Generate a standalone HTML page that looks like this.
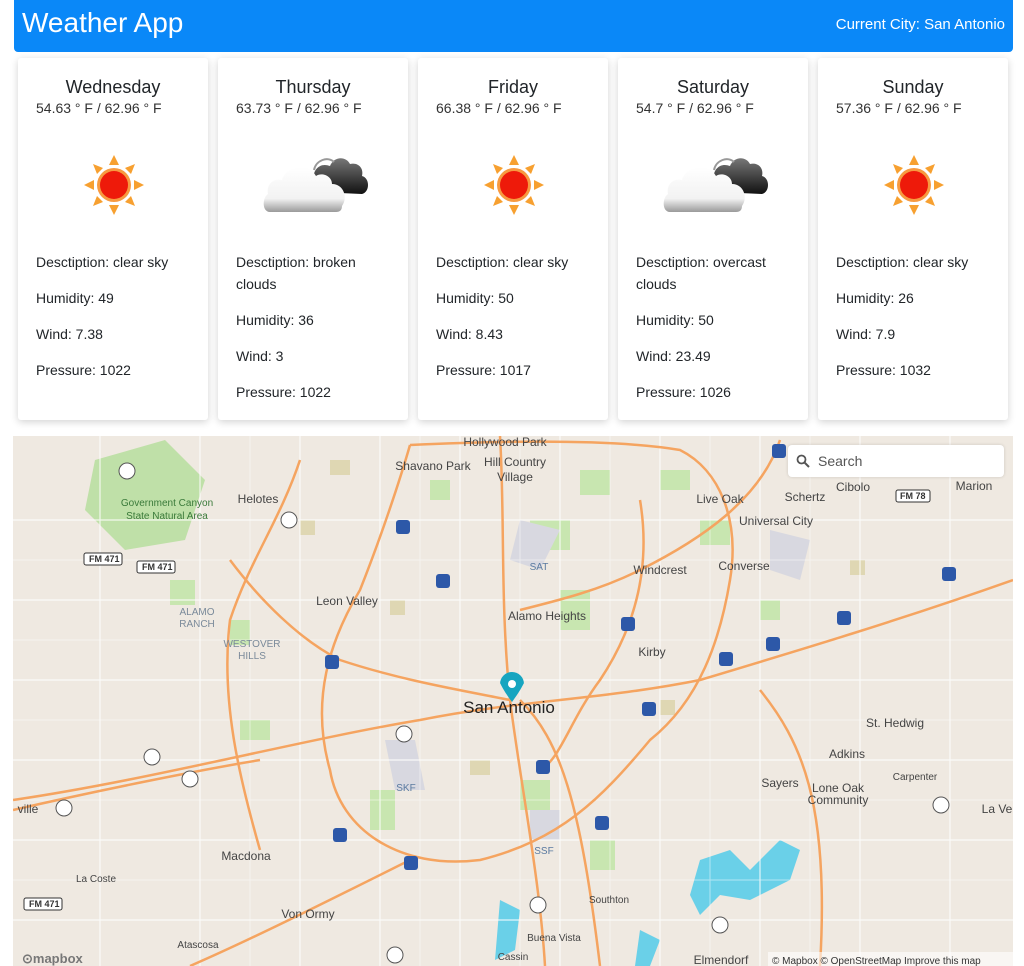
<!DOCTYPE html>
<html><head><meta charset="utf-8">
<style>
*{box-sizing:border-box}
body{margin:0;background:#fff;font-family:"Liberation Sans",Arial,sans-serif;color:#212529;width:1024px;height:966px;overflow:hidden;position:relative}
.hdr{position:absolute;left:14px;top:0;width:999px;height:52px;background:#0a88f8;border-radius:0 0 4px 4px;color:#fff}
.hdr h1{margin:0;position:absolute;left:8px;top:7px;font-size:28px;font-weight:400}
.hdr span{position:absolute;right:8px;top:16px;font-size:15px}
.card{position:absolute;top:58px;width:190px;height:362px;background:#fff;border-radius:3px;box-shadow:0 2px 8px rgba(0,0,0,.18)}
.card h3{margin:0;position:absolute;top:19px;width:100%;text-align:center;font-size:18px;font-weight:400}
.card .t{position:absolute;top:42px;left:18px;font-size:14px;color:#333}
.card .ic{position:absolute;top:90px;left:0;width:100%;height:70px}
.card .d{position:absolute;top:193px;left:18px;width:160px;font-size:14px;line-height:22px}
.card .d p{margin:0 0 14px}
.map{position:absolute;left:13px;top:436px;width:1000px;height:530px;background:#efe9e1;overflow:hidden}
.search{position:absolute;left:788px;top:445px;width:216px;height:32px;background:#fff;border-radius:4px;box-shadow:0 0 3px rgba(0,0,0,.15);font-size:14px;color:#555;padding:8px 0 0 30px}
</style></head><body>
<div class="hdr"><h1>Weather App</h1><span>Current City: San Antonio</span></div>

<svg width="0" height="0" style="position:absolute"><defs>
<linearGradient id="wg" x1="0" y1="0" x2="0" y2="1"><stop offset="0" stop-color="#fff"/><stop offset=".7" stop-color="#f2f2f2"/><stop offset="1" stop-color="#9a9a9a"/></linearGradient>
<linearGradient id="dg" x1="0" y1="0" x2="0" y2="1"><stop offset="0" stop-color="#777"/><stop offset="1" stop-color="#111"/></linearGradient>
<g id="sun"><g fill="#f7a030"><polygon points="0,-30 5,-20 -5,-20"/><polygon points="0,30 5,20 -5,20"/><polygon points="-30,0 -20,5 -20,-5"/><polygon points="30,0 20,5 20,-5"/><polygon points="-21,-21 -11,-17 -17,-11"/><polygon points="21,21 11,17 17,11"/><polygon points="21,-21 11,-17 17,-11"/><polygon points="-21,21 -11,17 -17,11"/></g><circle r="17" fill="#f79a40"/><circle r="14" fill="#ee1a0a"/></g>
<g id="cloud">
<path d="M100,44 C94,44 92,36 96,32 C94,22 102,14 112,18 C116,8 128,8 132,16 C140,14 146,20 144,28 C152,30 152,44 144,46 Z" fill="url(#dg)"/>
<path d="M96,22 C98,12 110,8 116,14" fill="none" stroke="#999" stroke-width="2"/>
<path d="M52,64 C44,64 44,50 50,46 C48,36 56,30 64,32 C68,18 90,14 98,28 C104,24 114,28 114,36 C126,36 130,50 124,58 C124,62 122,64 118,64 Z" fill="url(#wg)"/>
</g>
</defs></svg>

<div class="card" style="left:18px"><h3>Wednesday</h3><div class="t">54.63 ° F / 62.96 ° F</div><svg class="ic"><use href="#sun" transform="translate(96,37)"/></svg><div class="d"><p>Desctiption: clear sky</p><p>Humidity: 49</p><p>Wind: 7.38</p><p>Pressure: 1022</p></div></div>
<div class="card" style="left:218px"><h3>Thursday</h3><div class="t">63.73 ° F / 62.96 ° F</div><svg class="ic"><use href="#cloud"/></svg><div class="d"><p>Desctiption: broken clouds</p><p>Humidity: 36</p><p>Wind: 3</p><p>Pressure: 1022</p></div></div>
<div class="card" style="left:418px"><h3>Friday</h3><div class="t">66.38 ° F / 62.96 ° F</div><svg class="ic"><use href="#sun" transform="translate(96,37)"/></svg><div class="d"><p>Desctiption: clear sky</p><p>Humidity: 50</p><p>Wind: 8.43</p><p>Pressure: 1017</p></div></div>
<div class="card" style="left:618px"><h3>Saturday</h3><div class="t">54.7 ° F / 62.96 ° F</div><svg class="ic"><use href="#cloud"/></svg><div class="d"><p>Desctiption: overcast clouds</p><p>Humidity: 50</p><p>Wind: 23.49</p><p>Pressure: 1026</p></div></div>
<div class="card" style="left:818px"><h3>Sunday</h3><div class="t">57.36 ° F / 62.96 ° F</div><svg class="ic"><use href="#sun" transform="translate(96,37)"/></svg><div class="d"><p>Desctiption: clear sky</p><p>Humidity: 26</p><p>Wind: 7.9</p><p>Pressure: 1032</p></div></div>

<div class="map">
<svg width="1000" height="530" viewBox="13 436 1000 530" font-family="Liberation Sans,sans-serif">
<g fill="#c8e6b0">
<path d="M95,460 l70,-20 l40,40 l-20,60 l-60,10 l-40,-40z" fill="#bfe0a8"/>
<rect x="530" y="520" width="40" height="30"/><rect x="560" y="590" width="30" height="40"/><rect x="660" y="470" width="30" height="20"/><rect x="370" y="790" width="25" height="40"/><rect x="520" y="780" width="30" height="30"/><rect x="700" y="520" width="30" height="25"/><rect x="230" y="620" width="20" height="25"/><rect x="760" y="600" width="20" height="20"/><rect x="590" y="840" width="25" height="30"/><rect x="240" y="720" width="30" height="20"/><rect x="430" y="480" width="20" height="20"/><rect x="170" y="580" width="25" height="25"/><rect x="580" y="470" width="30" height="25"/>
</g>
<g fill="#d9cfa0" opacity=".7"><rect x="330" y="460" width="20" height="15"/><rect x="390" y="600" width="15" height="15"/><rect x="470" y="760" width="20" height="15"/><rect x="660" y="700" width="15" height="15"/><rect x="300" y="520" width="15" height="15"/><rect x="850" y="560" width="15" height="15"/></g>
<g fill="#d8d8e0"><path d="M520,520 l40,10 l-20,40 l-30,-10z"/><path d="M770,530 l40,10 l-10,40 l-30,-10z"/><path d="M385,740 l30,0 l10,50 l-30,0z"/><path d="M530,810 l30,0 l0,30 l-30,0z"/></g>
<g fill="#6ad0e8"><path d="M700,860 l30,-10 l20,20 l30,-30 l20,10 l-10,30 l-40,20 l-30,-5 l-20,20 l-10,-20z"/><path d="M500,900 l20,10 l-5,40 l-20,10z"/><path d="M640,930 l20,10 l-10,26 l-15,0z"/></g>
<g stroke="#fff" stroke-width="1.2" fill="none" opacity=".8">
<path d="M13,520 H1013 M13,600 H1013 M13,680 H1013 M13,760 H1013 M13,840 H1013 M13,920 H1013 M100,436 V966 M200,436 V966 M300,436 V966 M380,436 V966 M460,436 V966 M560,436 V966 M660,436 V966 M760,436 V966 M860,436 V966 M950,436 V966"/>
<path d="M13,560 H1013 M13,640 H1013 M13,720 H1013 M13,800 H1013 M13,880 H1013 M250,436 V966 M420,436 V966 M520,436 V966 M610,436 V966 M710,436 V966 M810,436 V966" stroke-width="1" opacity=".6"/>
</g>
<g stroke="#f5a460" stroke-width="2.5" fill="none">
<path d="M410,445 C520,440 620,440 680,450 C720,470 740,520 730,580 C720,640 700,700 650,740 C600,800 560,840 480,860 C400,870 340,830 330,770 C310,700 330,640 360,590 C380,540 400,480 410,445"/>
<path d="M13,800 C150,780 300,740 420,720 C520,700 600,700 700,680 C800,650 900,620 1013,580"/>
<path d="M13,810 C100,790 200,770 260,760"/>
<path d="M500,436 C505,520 500,600 510,700 C520,780 540,880 545,966"/>
<path d="M520,700 C560,740 580,800 600,966"/>
<path d="M230,560 C260,600 300,640 340,660 C400,680 460,690 510,700"/>
<path d="M640,500 C650,560 640,620 600,680 C570,720 560,760 540,770"/>
<path d="M780,440 C760,500 700,540 640,570 C600,590 560,600 520,610"/>
<path d="M190,966 C250,940 330,900 410,860"/>
<path d="M760,690 C800,740 830,800 820,966"/>
<path d="M300,460 C280,520 250,560 230,620 C220,700 240,780 260,850"/>
</g>
<g font-size="12" fill="#444" text-anchor="middle">
<text x="505" y="446">Hollywood Park</text><text x="433" y="470">Shavano Park</text><text x="515" y="466">Hill Country</text><text x="515" y="481">Village</text><text x="258" y="503">Helotes</text><text x="720" y="503">Live Oak</text><text x="805" y="501">Schertz</text><text x="853" y="491">Cibolo</text><text x="974" y="490">Marion</text><text x="776" y="525">Universal City</text><text x="660" y="574">Windcrest</text><text x="744" y="570">Converse</text><text x="347" y="605">Leon Valley</text><text x="547" y="620">Alamo Heights</text><text x="652" y="656">Kirby</text><text x="895" y="727">St. Hedwig</text><text x="847" y="758">Adkins</text><text x="780" y="787">Sayers</text><text x="838" y="792">Lone Oak</text><text x="838" y="804">Community</text><text x="915" y="780" font-size="10">Carpenter</text><text x="997" y="813">La Ve</text><text x="246" y="860">Macdona</text><text x="96" y="882" font-size="10">La Coste</text><text x="308" y="918">Von Ormy</text><text x="198" y="948" font-size="10">Atascosa</text><text x="554" y="941" font-size="10">Buena Vista</text><text x="609" y="903" font-size="10">Southton</text><text x="513" y="960" font-size="10">Cassin</text><text x="721" y="964">Elmendorf</text><text x="28" y="813">ville</text>
<text x="167" y="506" font-size="10" fill="#3a7a3a">Government Canyon</text><text x="167" y="519" font-size="10" fill="#3a7a3a">State Natural Area</text>
<text x="197" y="615" font-size="10" fill="#7a8a9a">ALAMO</text><text x="197" y="627" font-size="10" fill="#7a8a9a">RANCH</text><text x="252" y="647" font-size="10" fill="#7a8a9a">WESTOVER</text><text x="252" y="659" font-size="10" fill="#7a8a9a">HILLS</text>
<text x="539" y="570" font-size="10" fill="#5a7aa0">SAT</text><text x="406" y="791" font-size="10" fill="#5a7aa0">SKF</text><text x="544" y="854" font-size="10" fill="#5a7aa0">SSF</text>
</g>
<text x="509" y="713" font-size="17" fill="#222" text-anchor="middle">San Antonio</text>
<g font-size="9" font-weight="bold" fill="#333">
<rect x="84" y="553" width="38" height="12" rx="2" fill="#fff" stroke="#333"/><text x="89" y="562">FM 471</text>
<rect x="137" y="561" width="38" height="12" rx="2" fill="#fff" stroke="#333"/><text x="142" y="570">FM 471</text>
<rect x="896" y="490" width="34" height="12" rx="2" fill="#fff" stroke="#333"/><text x="900" y="499">FM 78</text>
<rect x="24" y="898" width="38" height="12" rx="2" fill="#fff" stroke="#333"/><text x="29" y="907">FM 471</text>
</g>
<g fill="#2d58a8">
<rect x="396" y="520" width="14" height="14" rx="3"/><rect x="436" y="574" width="14" height="14" rx="3"/><rect x="621" y="617" width="14" height="14" rx="3"/><rect x="325" y="655" width="14" height="14" rx="3"/><rect x="642" y="702" width="14" height="14" rx="3"/><rect x="536" y="760" width="14" height="14" rx="3"/><rect x="595" y="816" width="14" height="14" rx="3"/><rect x="333" y="828" width="14" height="14" rx="3"/><rect x="404" y="856" width="14" height="14" rx="3"/><rect x="719" y="652" width="14" height="14" rx="3"/><rect x="766" y="637" width="14" height="14" rx="3"/><rect x="837" y="611" width="14" height="14" rx="3"/><rect x="942" y="567" width="14" height="14" rx="3"/><rect x="772" y="444" width="14" height="14" rx="3"/>
</g>
<g fill="#fff" stroke="#555"><circle cx="127" cy="471" r="8"/><circle cx="289" cy="520" r="8"/><circle cx="152" cy="757" r="8"/><circle cx="190" cy="779" r="8"/><circle cx="64" cy="808" r="8"/><circle cx="404" cy="734" r="8"/><circle cx="941" cy="805" r="8"/><circle cx="395" cy="955" r="8"/><circle cx="538" cy="905" r="8"/><circle cx="720" cy="925" r="8"/></g>
<path d="M512,706 C500,690 500,685 500,688 a12,12 0 1 1 24,0 C524,685 524,690 512,706z" fill="#17a5c0" transform="translate(0,-4)"/>
<circle cx="512" cy="684" r="4" fill="#fff"/>
<text x="22" y="963" font-size="13" fill="#777" font-weight="bold">⊙mapbox</text>
<rect x="768" y="952" width="245" height="14" fill="rgba(255,255,255,.6)"/><text x="772" y="964" font-size="10" fill="#333">© Mapbox © OpenStreetMap  Improve this map</text>
</svg>
</div>
<div class="search"><svg style="position:absolute;left:8px;top:9px" width="14" height="14" viewBox="0 0 14 14"><circle cx="5.5" cy="5.5" r="4" fill="none" stroke="#555" stroke-width="1.8"/><path d="M8.5,8.5 L13,13" stroke="#555" stroke-width="2"/></svg>Search</div>
</body></html>
